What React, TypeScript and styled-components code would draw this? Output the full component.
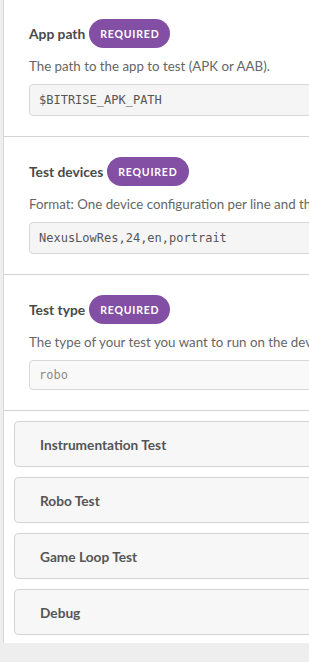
import React from "react";
import styled, { createGlobalStyle } from "styled-components";

const Global = createGlobalStyle`
  html, body { margin: 0; padding: 0; overflow: hidden; background: #eeeeee; }
  body { font-family: Lato, "Noto Sans", sans-serif; }
`;

const Page = styled.div`
  width: 700px;
  padding-left: 3px;
`;

const Panel = styled.div`
  background: #ffffff;
  border-left: 1px solid #d8d8d8;
`;

const Section = styled.div<{ $top?: number }>`
  padding: ${(p) => p.$top ?? 20}px 25px 20px 25px;
  border-bottom: 1px solid #d3d3d3;
`;

const Header = styled.div`
  display: flex;
  align-items: center;
  gap: 4px;
  height: 29px;
`;

const Title = styled.span`
  font-size: 13.8px;
  font-weight: 700;
  color: #4a4a4a;
`;

const Badge = styled.span`
  display: inline-flex;
  align-items: center;
  justify-content: center;
  height: 29px;
  padding: 0 11px;
  border-radius: 15px;
  background: #824fa5;
  color: #ffffff;
  font-size: 10.5px;
  font-weight: 700;
  letter-spacing: 0.8px;
`;

const Description = styled.div`
  margin-top: 8px;
  font-size: 13.3px;
  line-height: 20px;
  color: #666666;
  white-space: nowrap;
`;

const Input = styled.div<{ $h?: number; $muted?: boolean }>`
  margin-top: 8px;
  height: ${(p) => p.$h ?? 32}px;
  box-sizing: border-box;
  display: flex;
  align-items: center;
  padding-left: 9px;
  background: ${(p) => (p.$muted ? "#f9f9f9" : "#f5f5f5")};
  border: 1px solid #d8d8d8;
  border-radius: 4px;
  font-family: "DejaVu Sans Mono", monospace;
  font-size: 12px;
  color: ${(p) => (p.$muted ? "#8a8a8a" : "#555555")};
`;

const Groups = styled.div`
  display: flex;
  flex-direction: column;
  gap: 10px;
  padding: 10px 0 8px 10px;
`;

const Group = styled.div`
  height: 46px;
  box-sizing: border-box;
  display: flex;
  align-items: center;
  padding-left: 25px;
  background: #f7f7f7;
  border: 1px solid #d3d3d3;
  border-radius: 4px;
  font-size: 13.7px;
  font-weight: 700;
  color: #555555;
`;

const fields = [
  {
    title: "App path",
    desc: "The path to the app to test (APK or AAB).",
    value: "$BITRISE_APK_PATH",
    top: 19,
  },
  {
    title: "Test devices",
    desc: "Format: One device configuration per line and the parameters are separated with ,",
    value: "NexusLowRes,24,en,portrait",
  },
  {
    title: "Test type",
    desc: "The type of your test you want to run on the devices.",
    value: "robo",
    h: 30,
    muted: true,
  },
];

const groups = ["Instrumentation Test", "Robo Test", "Game Loop Test", "Debug"];

export default function App() {
  return (
    <Page>
      <Global />
      <Panel>
        {fields.map((f) => (
          <Section key={f.title} $top={f.top}>
            <Header>
              <Title>{f.title}</Title>
              <Badge>REQUIRED</Badge>
            </Header>
            <Description>{f.desc}</Description>
            <Input $h={f.h} $muted={f.muted}>
              {f.value}
            </Input>
          </Section>
        ))}
        <Groups>
          {groups.map((g) => (
            <Group key={g}>{g}</Group>
          ))}
        </Groups>
      </Panel>
    </Page>
  );
}
